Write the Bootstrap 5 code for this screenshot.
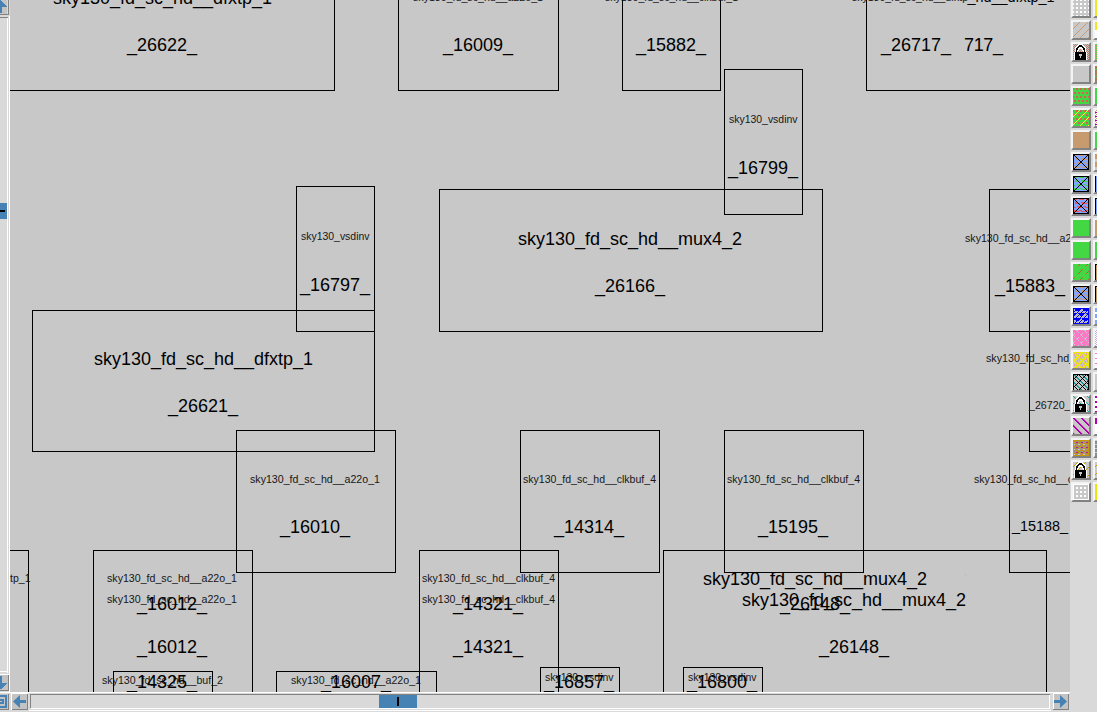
<!DOCTYPE html>
<html lang="en">
<head>
<meta charset="utf-8">
<meta name="viewport" content="width=device-width, initial-scale=1">
<title>Layout viewer</title>
<link href="https://cdn.jsdelivr.net/npm/bootstrap@5.3.0/dist/css/bootstrap.min.css" rel="stylesheet">
<style>
body{background:#d9d9d9;font-family:"Liberation Sans",Arial,sans-serif;height:712px;width:1097px}
svg{display:block}
.left-rail{width:10px}
.work{width:1060px}
.work svg{background:#c8c8c8}
.work rect{fill:none;stroke:#000;stroke-width:1;shape-rendering:crispEdges}
.work text{fill:#000;font-family:"Liberation Sans",Arial,sans-serif}
.work text.tiny{fill:#161616}
.hbar{height:20px;width:1070px}
.palette{width:27px;padding-left:1px;margin-top:-2px;row-gap:2px;column-gap:2px;display:grid;grid-template-columns:20px 20px;align-content:start;overflow:hidden}
.swatch{width:20px;height:20px;border:2px solid;border-color:#f4f4f4 #828282 #828282 #f4f4f4}
</style>
</head>
<body class="overflow-hidden">
<div class="d-flex h-100">
  <div class="d-flex flex-column flex-shrink-0">
    <div class="d-flex">
      <div class="left-rail">
        <svg width="10" height="692" shape-rendering="crispEdges">
          <rect width="10" height="692" fill="#d9d9d9"/>
          <rect width="7" height="14" fill="#c3c3c3"/>
          <path d="M0 0L7 7H2V13H0Z" fill="#4682b4"/>
          <path d="M0 14H9V15H0ZM8 0H9V14H8ZM0 17H8V18H0Z" fill="#828282"/>
          <path d="M7 18H8V673H7ZM9 16H10V692H9ZM0 671H8V672H0ZM0 674H9V675H0Z" fill="#fff"/>
          <rect y="203" width="7" height="16" fill="#4682b4"/>
          <rect y="210" width="5" height="2" fill="#000"/>
          <rect y="675" width="8" height="15" fill="#c3c3c3"/>
          <path d="M0 676H2V683H7L1 689H0Z" fill="#4682b4"/>
          <path d="M8 675H9V691H8ZM0 690H9V691H0Z" fill="#828282"/>
        </svg>
      </div>
      <div class="work"><svg id="canvas" width="1060" height="692" viewBox="10 0 1060 692"></svg></div>
    </div>
    <div class="hbar">
      <svg width="1070" height="20" shape-rendering="crispEdges">
        <rect width="1070" height="20" fill="#d9d9d9"/>
        <path d="M0 0H1070V1H0ZM29 18H1051V19H29Z" fill="#fff"/>
        <rect x="0" y="2" width="8" height="16" fill="#c3c3c3"/>
        <path d="M0 3H7V16H0V14H5V5H0ZM0 7H4V12H0V10H2V9H0Z" fill="#4682b4"/>
        <path d="M8 2H9V18H8ZM0 17H8V18H0Z" fill="#828282"/>
        <rect x="12" y="2" width="16" height="16" fill="#c3c3c3"/>
        <path d="M11 1H28V2H12V18H11ZM1053 1H1069V2H1054V17H1053Z" fill="#fff"/>
        <path d="M27 2H28V18H12V17H27Z" fill="#828282"/>
        <path d="M13 9.5L20 3V8H26V11H20V16Z" fill="#4682b4" shape-rendering="auto"/>
        <path d="M30 2H1050V3H31V16H30Z" fill="#828282"/>
        <path d="M31 16H1050V17H31ZM1049 3H1050V17H1049Z" fill="#fff"/>
        <rect x="379" y="3" width="38" height="13" fill="#4682b4"/>
        <rect x="397" y="5" width="2" height="9" fill="#000"/>
        <rect x="1054" y="2" width="15" height="16" fill="#c3c3c3"/>
        <path d="M1068 2H1069V18H1053V17H1068Z" fill="#828282"/>
        <path d="M1067 9.5L1060 3V8H1054V11H1060V16Z" fill="#4682b4" shape-rendering="auto"/>
      </svg>
    </div>
  </div>
  <div class="palette" id="palette"></div>
</div>
<script src="https://cdn.jsdelivr.net/npm/bootstrap@5.3.0/dist/js/bootstrap.bundle.min.js"></script>
<script>
// Cell outlines: left, top, right, bottom
const cells = [
 [0,-20,334,90],[398,-20,558,90],[622,-20,720,90],[866,-20,1090,90],
 [724,69,802,214],[439,189,822,331],[989,189,1090,331],[296,186,374,331],
 [32,310,374,451],[1029,310,1090,451],[236,430,395,572],[520,430,659,572],
 [724,430,863,572],[1009,430,1090,572],[0,550,28,710],[93,550,252,710],
 [419,550,558,710],[663,550,1046,710],[113,671,212,710],[276,671,436,710],
 [540,667,619,710],[683,667,762,710]];
// Labels: text, left, baseline, width, font size
const P='sky130_fd_sc_hd__', S=10.67;
const labels = [
 [P+'dfxtp_1',53,4,219,18],['_26622_',127,51,70,18],
 [P+'a22o_1',413,1,130,S],['_16009_',443,51,70,18],
 [P+'clkbuf_1',605,1,133,S],['_15882_',636,51,70,18],
 [P+'dfxtp',852,1,116,S],['_hd__dfxtp_1',967.5,2,87,14.4],
 ['_26717_',881,51,70,18],['717_',964,51,39,18],
 ['sky130_vsdinv',729,123,68.5,S],['_16799_',728,174,70,18],
 [P+'mux4_2',518,245,224,18],['_26166_',595,292,70,18],
 [P+'a22o_1',965,242,130,S],['_15883_',995,292,70,18],
 ['sky130_vsdinv',301,240,68.5,S],['_16797_',300,291,70,18],
 [P+'dfxtp_1',94,365,219,18],['_26621_',168,412,70,18],
 [P+'dfxtp_1',986,362,130,S],['_26720_',1029,409,41.5,S],
 [P+'a22o_1',250,483,130,S],['_16010_',280,533,70,18],
 [P+'clkbuf_4',523,483,133,S],['_14314_',554,533,70,18],
 [P+'clkbuf_4',727,483,133,S],['_15195_',758,533,70,18],
 [P+'clkbuf_4',974,483,133,S],['_15188_',1012,531,56,14.4],
 ['tp_1',10,582,20.5,S],
 [P+'a22o_1',107,582,130,S],[P+'a22o_1',107,603,130,S],['_16012_',137,610,70,18],['_16012_',137,653,70,18],
 [P+'clkbuf_4',422,582,133,S],[P+'clkbuf_4',422,603,133,S],['_14321_',453,610,70,18],['_14321_',453,653,70,18],
 [P+'mux4_2',703,585,224,18],[P+'mux4_2',742,606,224,18],['_26148_',780,610,70,18],['_26148_',819,653,70,18],
 [P+'buf_2',102,684,121,S],['_14325_',127,688,70,18],
 [P+'a22o_1',291,684,130,S],['_16007_',321,688,70,18],
 ['sky130_vsdinv',545,681,68.5,S],['_16857_',544,688,70,18],
 ['sky130_vsdinv',688,681,68.5,S],['_16800_',687,688,70,18]];
document.getElementById('canvas').innerHTML =
 cells.map(([a,b,c,d])=>`<rect x="${a+.5}" y="${b+.5}" width="${c-a}" height="${d-b}"/>`).join('') +
 labels.map(([t,x,y,w,s])=>`<text ${s==S?'class="tiny" lengthAdjust="spacingAndGlyphs"':''} x="${x}" y="${y}" font-size="${s==S?11:s}" textLength="${w}">${t}</text>`).join('') +
 '<path d="M965.5 574v2M965.5 583v2" stroke="#a9c6c6"/>';

// Layer swatches, each a 16 by 16 stipple
const G='#c8c8c8',N='#43d843',T='#c89b6e',B='#82a5ff',R='#e05a5a',K='#000',W='#fff';
const lock = [
 '.....WWWWW......','....WW###WW.....','...WW#####WW....','..WW##WWW##WW...',
 '..W##WWWWW##W...','..W##W...W##W...','..W#WW...WW#W...','..W#W.....W#W...',
 '.W###########W..','.W###########W..','.W####sss####W..','.W####sss####W..',
 '.W#####s#####W..','.W#####s#####W..','.W###########W..','.W###########W..'];
const locked = bg=>(x,y)=>{const c=lock[y][x];return c=='#'?K:c=='W'?W:c=='s'?G:bg(x,y)};
const crossed = c=>(x,y)=>x==0||x==15||y==0||y==15||x==y||x+y==15||(x>6&&x<9&&y>6&&y<9)?K:(y%4==1&&(x+y)%7<5||y%4==0&&(x+y)%6<3)?c:B;
const solid = c=>()=>c;
const swatches = [
 [(x,y)=>(x+1)%4<2&&(y+1)%4<2?W:G, ()=>'#f0e622'],
 [(x,y)=>(x+y)%8==6?T:G, (x,y)=>y<8?'#f0e622':W],
 [locked((x,y)=>(x+y)%2?G:(x%4==0?N:'#b07a68')), (x,y)=>(x+y)%2?N:T],
 [solid(G), (x,y)=>y%7==3?N:'#a97a55'],
 [(x,y)=>(y%4<2)&&(x+(y%8<4?1:3))%4<2?R:N, solid(N)],
 [(x,y)=>(x+y)%8==6?'#ffff20':(y%4<2)&&(x+(y%8<4?1:3))%4<2?R:N, (x,y)=>y%4==2?'#b000a0':(x+y)%2?T:W],
 [solid(T), solid(N)],
 [crossed(T), (x,y)=>y%8<5?T:G],
 [crossed(N), x=>x?B:K],
 [crossed('#f05050'), (x,y)=>x&&y?B:K],
 [solid(N), solid(T)],
 [solid(N), solid(N)],
 [(x,y)=>(x+y)%8==6&&(y<2||y>4&&y<10&&x>1||y>12)?'#a86a32':N, (x,y)=>x&&y?T:K],
 [crossed(T), (x,y)=>x&&y?T:K],
 [(x,y)=>x==0||x==15||y==0||y==15||(y%5<3&&Math.abs((x+(y%10<5?0:4))%8-4)<4-y%5)||(x+y)%4==0?'#0000f5':(x+y)%2?G:'#9fa8f2', (x,y)=>y%6<4?B:W],
 [(x,y)=>(x-y+16)%8==3&&y%4<3||(x+y)%8==4&&x%4<2?G:'#ff78c8', (x,y)=>(x+y)%2?'#c8a8e0':W],
 [(x,y)=>x==0||y==0||x==15||((x+y)%8<3||(x-y+16)%8<2)?'#ebe60a':(x*3+y)%5<2?'#e49aba':G, (x,y)=>y%5==1?'#ff78c8':W],
 [(x,y)=>y==0||x==0||x==15||(x+y)%8==5?K:(x-y+16)%8<2?'#209c98':(x-y+16)%8==5?K:G, solid(G)],
 [locked((x,y)=>(x-y+16)%7==2?'#20a8a0':G), (x,y)=>y%5<2?'#b000b0':W],
 [(x,y)=>(x-y+16)%8<2?'#b000b0':(x-y+16)%8==2?'#c6a0b8':G, (x,y)=>y<6?'#b000b0':W],
 [(x,y)=>x==0||x==15||y==0||y==15?'#c8960a':(y%5==2&&x%5>2)?'#c01890':(x+2*y)%5<2?'#a09080':y%5==4&&x%5<3?G:(x+y)%3==0?'#a09080':'#c8960a', (x,y)=>y%4?'#8c8c8c':G],
 [locked((x,y)=>(x+y)%8==4?'#c8960a':G), (x,y)=>(x+y)%8==4?'#c8960a':G],
 [(x,y)=>y==0||y==15||x==0||x==15||((x+1)%4<2&&(y+1)%4<2)?W:G, solid('#ebe60a')]];
function draw(f,w){
  let out='';
  for(let y=0;y<16;y++) for(let x=0;x<w;){
    const c=f(x,y); let n=1;
    while(x+n<w&&f(x+n,y)===c) n++;
    out+=`<rect x="${x}" y="${y}" width="${n}" height="1" fill="${c}"/>`; x+=n;
  }
  return `<div class="swatch"><svg width="16" height="16" shape-rendering="crispEdges">${out}</svg></div>`;
}
document.getElementById('palette').innerHTML = swatches.map(([a,b])=>draw(a,16)+draw(b,2)).join('');
</script>
</body>
</html>
